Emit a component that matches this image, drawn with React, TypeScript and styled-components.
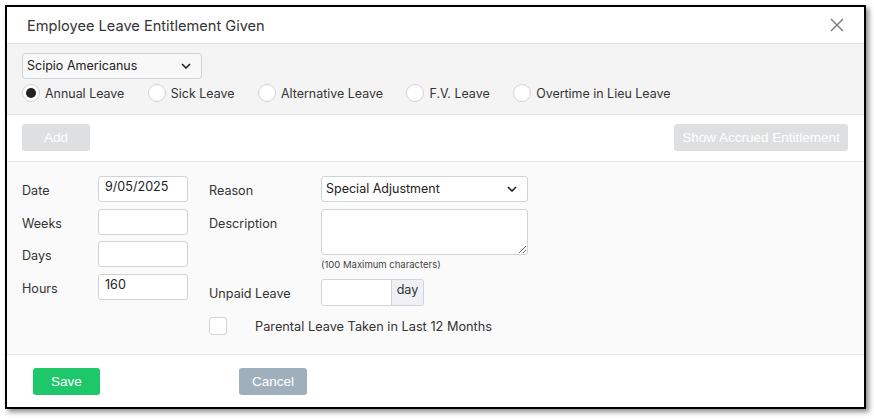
import React from "react";
import styled, { createGlobalStyle } from "styled-components";

const Global = createGlobalStyle`
  html, body { margin: 0; padding: 0; background: #fff; }
  body { font-family: Inter, "Noto Sans", sans-serif; color: #333; }
  * { box-sizing: border-box; }
`;

const Page = styled.div`
  padding: 5px;
  width: 874px;
  height: 419px;
`;

const Dialog = styled.div`
  width: 861px;
  height: 404px;
  border: 2px solid #000;
  background: #fff;
  box-shadow: 3px 3px 5px rgba(0, 0, 0, 0.45);
  display: flex;
  flex-direction: column;
`;

const Header = styled.div`
  height: 37px;
  display: flex;
  align-items: center;
  justify-content: space-between;
  padding: 0 19px 0 20px;
  border-bottom: 1px solid #e6e6e6;
`;

const Title = styled.div`
  font-size: 14.6px;
  color: #333;
  padding-top: 1px;
`;

const CloseButton = styled.div`
  width: 16px;
  height: 16px;
  display: flex;
  align-items: center;
  justify-content: center;
`;

const TopSection = styled.div`
  background: #f4f4f4;
  padding: 9px 15px 0 15px;
  height: 71px;
  border-bottom: 1px solid #e6e6e6;
`;

const SelectBox = styled.div<{ $width: number }>`
  width: ${(p) => p.$width}px;
  height: 26px;
  border: 1px solid #cfd3da;
  border-radius: 3px;
  background: ${(p) => (p.$width > 190 ? "#fff" : "#f8f8f8")};
  display: flex;
  align-items: center;
  justify-content: space-between;
  padding: 0 10px 0 4px;
  font-size: 12.5px;
  color: #222;
`;

const SelectText = styled.span`
  padding-bottom: 2px;
`;

const RadioRow = styled.div`
  display: flex;
  align-items: center;
  height: 24px;
  margin-top: 2px;
`;

const RadioItem = styled.label<{ $gap: number }>`
  display: flex;
  align-items: center;
  font-size: 12.45px;
  color: #333;
  margin-right: ${(p) => p.$gap}px;
`;

const RadioCircle = styled.span<{ $checked?: boolean }>`
  width: 18px;
  height: 18px;
  border-radius: 50%;
  border: 1px solid #d4d4d4;
  background: #fff;
  margin-right: 5px;
  display: flex;
  align-items: center;
  justify-content: center;
  &::after {
    content: "";
    width: 10px;
    height: 10px;
    border-radius: 50%;
    background: ${(p) => (p.$checked ? "#222" : "transparent")};
  }
`;

const ActionBar = styled.div`
  height: 47px;
  padding: 9px 16px 0 15px;
  display: flex;
  justify-content: space-between;
  align-items: flex-start;
  border-bottom: 1px solid #e6e6e6;
`;

const Button = styled.button<{ $bg: string; $width: number }>`
  width: ${(p) => p.$width}px;
  height: 27px;
  border: none;
  border-radius: 3px;
  background: ${(p) => p.$bg};
  color: #fff;
  font-family: "Liberation Sans", Arial, sans-serif;
  font-size: 13.5px;
  padding: 0;
  cursor: pointer;
`;

const FormSection = styled.div`
  flex: 1;
  background: #fafafa;
  padding: 14px 15px 0 15px;
  display: flex;
  gap: 21px;
  border-bottom: 1px solid #e6e6e6;
`;

const Column = styled.div`
  display: flex;
  flex-direction: column;
  gap: 6.6px;
`;

const Row = styled.div`
  display: flex;
  align-items: flex-start;
`;

const Label = styled.div<{ $width: number }>`
  width: ${(p) => p.$width}px;
  height: 26px;
  line-height: 26px;
  padding-top: 2px;
  font-size: 12.6px;
  color: #333;
`;

const TextInput = styled.div<{ $width: number }>`
  width: ${(p) => p.$width}px;
  height: 26px;
  border: 1px solid #cfd3da;
  border-radius: 3px;
  background: #fff;
  font-size: 12.6px;
  color: #222;
  padding: 2px 0 0 6px;
`;

const TextArea = styled.textarea`
  width: 207px;
  height: 46px;
  border: 1px solid #cfd3da;
  border-radius: 3px;
  background: #fff;
  margin: 0;
  display: block;
  font-family: inherit;
`;

const Hint = styled.div`
  font-size: 9.5px;
  color: #444;
  margin-top: 4px;
  margin-bottom: 3px;
`;

const FieldStack = styled.div`
  display: flex;
  flex-direction: column;
`;

const InputGroup = styled.div`
  display: flex;
  height: 27px;
  border: 1px solid #cfd3da;
  border-radius: 3px;
  overflow: hidden;
`;

const GroupInput = styled.div`
  width: 70px;
  background: #fff;
  border-right: 1px solid #cfd3da;
`;

const Addon = styled.div`
  width: 31px;
  background: #eef0f5;
  font-size: 12.6px;
  color: #333;
  display: flex;
  justify-content: center;
  padding-top: 2px;
`;

const Checkbox = styled.span`
  width: 18px;
  height: 18px;
  border: 1px solid #d4d4d4;
  border-radius: 3px;
  background: #fff;
  margin-right: 28px;
`;

const CheckRow = styled.div`
  display: flex;
  align-items: center;
  font-size: 12.75px;
  color: #333;
  margin-top: 4px;
  & > span:last-child {
    padding-top: 2px;
  }
`;

const CheckText = styled.span`
  padding-top: 2px;
`;

const Footer = styled.div`
  height: 52px;
  padding: 13px 0 0 26px;
  display: flex;
  gap: 139px;
  align-items: flex-start;
`;

const Chevron = () => (
  <svg width="10" height="6" viewBox="0 0 10 6">
    <polyline points="1,1 5,5 9,1" fill="none" stroke="#222" strokeWidth="1.6" />
  </svg>
);

const radios = [
  { label: "Annual Leave", checked: true, gap: 23.5 },
  { label: "Sick Leave", gap: 23.5 },
  { label: "Alternative Leave", gap: 23.5 },
  { label: "F.V. Leave", gap: 23.5 },
  { label: "Overtime in Lieu Leave", gap: 0 },
];

export default function App() {
  return (
    <>
      <Global />
      <Page>
        <Dialog>
          <Header>
            <Title>Employee Leave Entitlement Given</Title>
            <CloseButton>
              <svg width="14" height="14" viewBox="0 0 14 14">
                <path d="M1 1 L13 13 M13 1 L1 13" stroke="#777" strokeWidth="1.4" />
              </svg>
            </CloseButton>
          </Header>
          <TopSection>
            <SelectBox $width={180}>
              <SelectText>Scipio Americanus</SelectText>
              <Chevron />
            </SelectBox>
            <RadioRow>
              {radios.map((r) => (
                <RadioItem key={r.label} $gap={r.gap}>
                  <RadioCircle $checked={r.checked} />
                  {r.label}
                </RadioItem>
              ))}
            </RadioRow>
          </TopSection>
          <ActionBar>
            <Button $bg="#dedfe0" $width={68}>Add</Button>
            <Button $bg="#dedfe0" $width={174}>Show Accrued Entitlement</Button>
          </ActionBar>
          <FormSection>
            <Column>
              <Row>
                <Label $width={76}>Date</Label>
                <TextInput $width={90}>9/05/2025</TextInput>
              </Row>
              <Row>
                <Label $width={76}>Weeks</Label>
                <TextInput $width={90} />
              </Row>
              <Row>
                <Label $width={76}>Days</Label>
                <TextInput $width={90} />
              </Row>
              <Row>
                <Label $width={76}>Hours</Label>
                <TextInput $width={90}>160</TextInput>
              </Row>
            </Column>
            <Column>
              <Row>
                <Label $width={112}>Reason</Label>
                <SelectBox $width={207}>
                  <SelectText>Special Adjustment</SelectText>
                  <Chevron />
                </SelectBox>
              </Row>
              <Row>
                <Label $width={112}>Description</Label>
                <FieldStack>
                  <TextArea />
                  <Hint>(100 Maximum characters)</Hint>
                </FieldStack>
              </Row>
              <Row>
                <Label $width={112}>Unpaid Leave</Label>
                <InputGroup>
                  <GroupInput />
                  <Addon>day</Addon>
                </InputGroup>
              </Row>
              <CheckRow>
                <Checkbox />
                <CheckText>Parental Leave Taken in Last 12 Months</CheckText>
              </CheckRow>
            </Column>
          </FormSection>
          <Footer>
            <Button $bg="#1ec86a" $width={67}>Save</Button>
            <Button $bg="#9fb0bc" $width={68}>Cancel</Button>
          </Footer>
        </Dialog>
      </Page>
    </>
  );
}
